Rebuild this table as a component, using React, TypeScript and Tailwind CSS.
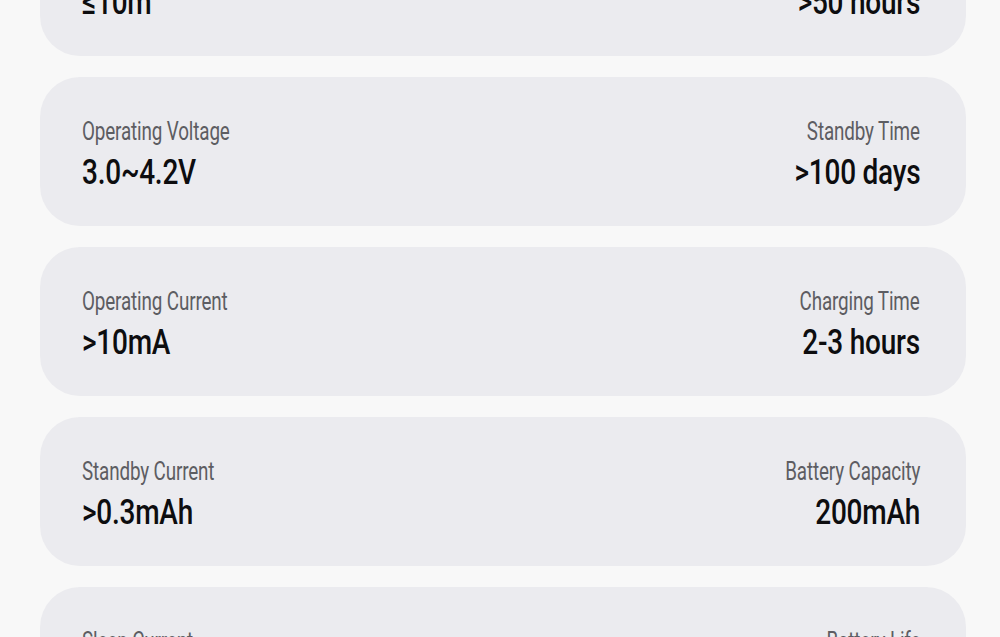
import React from 'react'

interface SpecRow {
  leftLabel: string
  leftValue: string
  rightLabel: string
  rightValue: string
}

const rows: SpecRow[] = [
  { leftLabel: 'Transmission Distance', leftValue: '≤10m', rightLabel: 'Working Time', rightValue: '>50 hours' },
  { leftLabel: 'Operating Voltage', leftValue: '3.0~4.2V', rightLabel: 'Standby Time', rightValue: '>100 days' },
  { leftLabel: 'Operating Current', leftValue: '>10mA', rightLabel: 'Charging Time', rightValue: '2-3 hours' },
  { leftLabel: 'Standby Current', leftValue: '>0.3mAh', rightLabel: 'Battery Capacity', rightValue: '200mAh' },
  { leftLabel: 'Sleep Current', leftValue: '<10μA', rightLabel: 'Battery Life', rightValue: '>500 cycles' },
]

function Spec({ label, value, right }: { label: string; value: string; right?: boolean }) {
  const origin = right ? 'origin-right' : 'origin-left'
  return (
    <div className={`flex flex-col ${right ? 'items-end' : 'items-start'}`}>
      <span className={`inline-block whitespace-nowrap text-[26px] leading-[30px] text-[#5d5d62] tracking-[-0.2px] scale-x-[0.725] ${origin}`}>
        {label}
      </span>
      <span className={`mt-[7px] inline-block whitespace-nowrap text-[35px] leading-[40px] font-medium text-[#0d0d0f] tracking-[-0.3px] scale-x-[0.8] ${origin}`}>
        {value}
      </span>
    </div>
  )
}

export default function App() {
  return (
    <main className="h-[637px] overflow-hidden bg-[#f8f8f8]" style={{ fontFamily: 'Roboto, "Liberation Sans", sans-serif' }}>
      <div className="-mt-[93px] ml-[40px] w-[926px] flex flex-col gap-[21px]">
        {rows.map((row) => (
          <div
            key={row.leftLabel}
            className="h-[149px] rounded-[40px] bg-[#ebebef] pl-[42px] pr-[46px] pt-[39px] flex justify-between items-start"
          >
            <Spec label={row.leftLabel} value={row.leftValue} />
            <Spec label={row.rightLabel} value={row.rightValue} right />
          </div>
        ))}
      </div>
    </main>
  )
}
